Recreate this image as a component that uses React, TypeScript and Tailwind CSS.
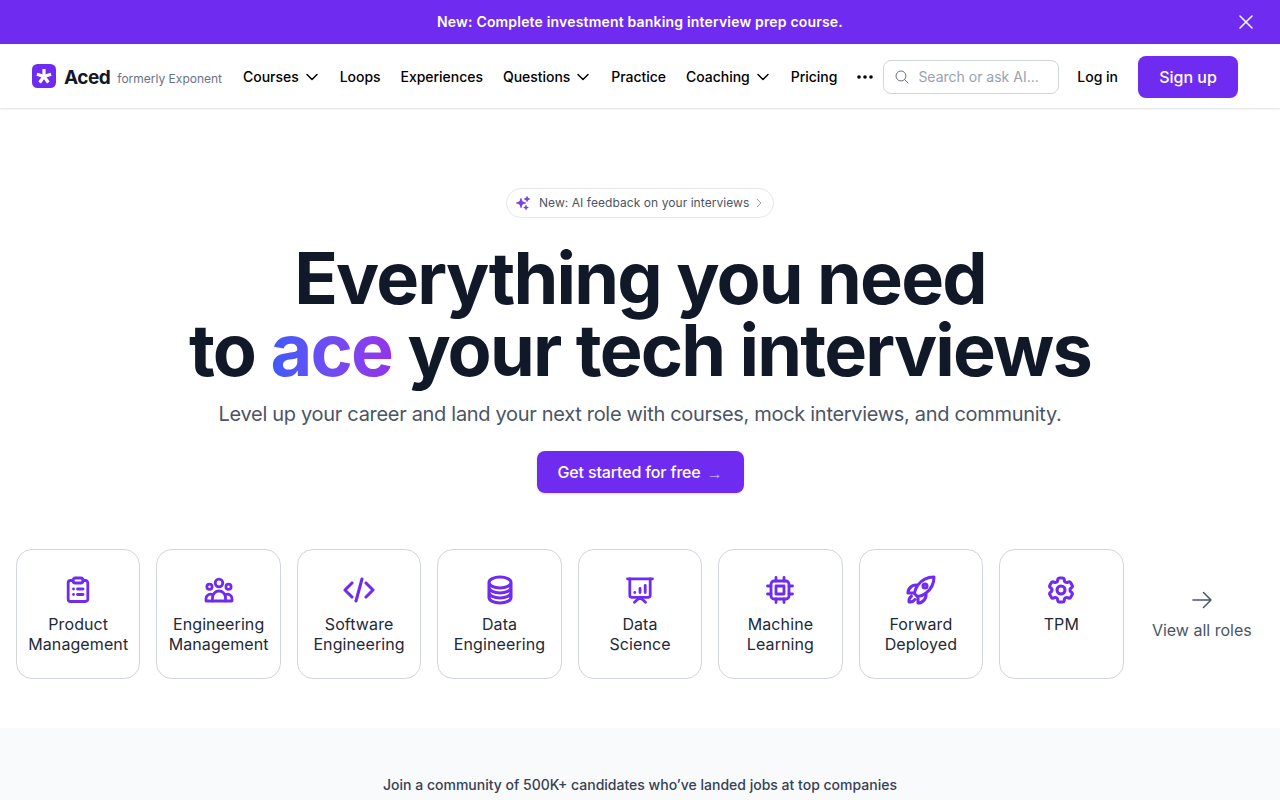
import {
  HiOutlineCodeBracket,
  HiOutlineCircleStack,
  HiOutlineRocketLaunch,
  HiOutlineCog6Tooth,
  HiOutlineChevronDown,
  HiOutlineChevronRight,
  HiOutlineMagnifyingGlass,
  HiOutlineXMark,
  HiOutlineArrowRight,
  HiSparkles,
} from 'react-icons/hi2'

type IconProps = { className?: string; strokeWidth?: number }

const navItems = [
  { label: 'Courses', menu: true },
  { label: 'Loops', menu: false },
  { label: 'Experiences', menu: false },
  { label: 'Questions', menu: true },
  { label: 'Practice', menu: false },
  { label: 'Coaching', menu: true },
  { label: 'Pricing', menu: false },
]

function ClipboardIcon({ className }: IconProps) {
  return (
    <svg viewBox="0 0 32 32" fill="none" stroke="currentColor" strokeWidth="2.8" strokeLinecap="round" strokeLinejoin="round" className={className}>
      <path d="M11 6.5H8.5a2.3 2.3 0 0 0-2.3 2.3v16.4a2.3 2.3 0 0 0 2.3 2.3h15a2.3 2.3 0 0 0 2.3-2.3V8.8a2.3 2.3 0 0 0-2.3-2.3H21" />
      <rect x="11" y="4" width="10" height="5" rx="2.2" />
      <path d="M11.5 15h.01M15.5 15h5.5M11.5 20.5h.01M15.5 20.5h5.5" />
    </svg>
  )
}

function GroupIcon({ className }: IconProps) {
  return (
    <svg viewBox="0 0 32 32" fill="none" stroke="currentColor" strokeWidth="2.8" strokeLinecap="round" strokeLinejoin="round" className={className}>
      <circle cx="16" cy="9" r="3.8" />
      <circle cx="6.5" cy="12.8" r="2.6" />
      <circle cx="25.5" cy="12.8" r="2.6" />
      <path d="M3 27h26v-2.2a4.6 4.6 0 0 0-6.5-4.2M3 27v-2.2a4.6 4.6 0 0 1 6.5-4.2" />
      <path d="M9.5 27v-3.5a6.5 6.5 0 0 1 13 0V27" />
    </svg>
  )
}

function PresentationIcon({ className }: IconProps) {
  return (
    <svg viewBox="0 0 32 32" fill="none" stroke="currentColor" strokeWidth="2.8" strokeLinecap="round" strokeLinejoin="round" className={className}>
      <path d="M3.5 4.8h25" />
      <path d="M5.8 4.8v16.5a2 2 0 0 0 2 2h16.4a2 2 0 0 0 2-2V4.8" />
      <path d="M16 23.3l-5.5 5M16 23.3l5.5 5" />
      <path d="M10.8 18.5v.01M16 18.5v-4M21.2 18.5v-7" />
    </svg>
  )
}

function ChipIcon({ className }: IconProps) {
  return (
    <svg viewBox="0 0 32 32" fill="none" stroke="currentColor" strokeWidth="2.8" strokeLinecap="round" strokeLinejoin="round" className={className}>
      <rect x="7" y="7" width="18" height="18" rx="3" />
      <rect x="12" y="12" width="8" height="8" />
      <path d="M12 3.5V7M20 3.5V7M12 25v3.5M20 25v3.5M3.5 12H7M3.5 20H7M25 12h3.5M25 20h3.5" />
    </svg>
  )
}

const roles = [
  { icon: ClipboardIcon, lines: ['Product', 'Management'] },
  { icon: GroupIcon, lines: ['Engineering', 'Management'] },
  { icon: HiOutlineCodeBracket, lines: ['Software', 'Engineering'] },
  { icon: HiOutlineCircleStack, lines: ['Data', 'Engineering'] },
  { icon: PresentationIcon, lines: ['Data', 'Science'] },
  { icon: ChipIcon, lines: ['Machine', 'Learning'] },
  { icon: HiOutlineRocketLaunch, lines: ['Forward', 'Deployed'] },
  { icon: HiOutlineCog6Tooth, lines: ['TPM'] },
]

function Logo() {
  return (
    <svg viewBox="0 0 24 24" className="-mt-0.5 h-6 w-6 shrink-0">
      <rect width="24" height="24" rx="5.5" fill="#6f2cf0" />
      <g stroke="#fff" strokeWidth="3.2">
        <path d="M12 12.5V5" />
        <path d="M12 12.5l7.1-2.3" />
        <path d="M12 12.5l4.4 6" />
        <path d="M12 12.5l-4.4 6" />
        <path d="M12 12.5l-7.1-2.3" />
      </g>
    </svg>
  )
}

export default function App() {
  return (
    <div className="flex h-screen flex-col overflow-hidden bg-white font-['Inter',sans-serif]">
      <div className="relative flex h-11 shrink-0 items-center justify-center bg-[#6f2cf0] text-sm font-semibold tracking-[0.18px] text-white">
        <span>New: Complete investment banking interview prep course.</span>
        <HiOutlineXMark className="absolute right-[22px] top-[10px] h-6 w-6" />
      </div>

      <header className="flex h-16 shrink-0 items-center whitespace-nowrap pl-8 pr-[42px] pt-[2px] shadow-[0_1px_2px_rgba(0,0,0,0.12)]">
        <div className="flex w-[191px] shrink-0 items-center">
          <Logo />
          <span className="ml-2 text-[19px] font-bold leading-none tracking-tight text-[#111827]">Aced</span>
          <span className="ml-[7px] mt-[3px] text-xs text-gray-500">formerly Exponent</span>
        </div>
        <nav className="ml-5 flex items-center gap-5 text-sm font-medium tracking-[-0.03px] text-black">
          {navItems.map((item) => (
            <div key={item.label} className="flex items-center gap-1">
              <span>{item.label}</span>
              {item.menu && <HiOutlineChevronDown className="ml-px h-4 w-4" strokeWidth={2.2} />}
            </div>
          ))}
          <svg viewBox="0 0 16 16" fill="currentColor" className="h-4 w-4">
            <circle cx="2" cy="8" r="1.8" />
            <circle cx="8" cy="8" r="1.8" />
            <circle cx="14" cy="8" r="1.8" />
          </svg>
        </nav>
        <div className="ml-[10px] flex h-[34px] w-[176px] items-center gap-2 rounded-lg border border-gray-300 pl-[10px] text-sm text-gray-400">
          <HiOutlineMagnifyingGlass className="h-4 w-4 text-gray-500" />
          <span>Search or ask AI...</span>
        </div>
        <span className="ml-[18px] text-sm font-medium text-black">Log in</span>
        <button className="ml-5 h-[42px] w-[100px] rounded-lg bg-[#6f2cf0] text-base font-medium text-white">Sign up</button>
      </header>

      <main className="flex flex-col items-center pt-20">
        <div className="flex h-[30px] w-[268px] items-center rounded-full border border-gray-200 pl-2 text-xs tracking-[0.06px] text-gray-600">
          <HiSparkles className="h-4 w-4 text-[#7c3fe0]" />
          <span className="ml-2">New: AI feedback on your interviews</span>
          <HiOutlineChevronRight className="ml-1 h-3 w-3 text-gray-500" />
        </div>

        <h1 className="mt-6 text-center text-[72px] font-bold leading-[72px] tracking-[-0.025em] text-[#111827]">
          Everything you need
          <br />
          to{' '}
          <span className="bg-gradient-to-r from-[#3b5bfb] to-[#9333ea] bg-clip-text text-transparent">ace</span>{' '}
          your tech interviews
        </h1>

        <p className="mt-[14px] text-xl leading-7 tracking-[-0.31px] text-gray-600">
          Level up your career and land your next role with courses, mock interviews, and community.
        </p>

        <button className="mt-[23px] flex h-[42px] w-[207px] items-center justify-center gap-[6px] rounded-lg bg-[#6f2cf0] text-base font-medium tracking-[-0.15px] text-white shadow-sm">
          <span>Get started for free</span>
          <span className="mt-1 font-['Liberation_Sans',sans-serif] text-base text-white/60">→</span>
        </button>

        <div className="mt-14 grid w-full grid-cols-9 gap-4 px-4">
          {roles.map((role) => (
            <div
              key={role.lines[0] + role.lines[role.lines.length - 1]}
              className="flex h-[130px] flex-col items-center rounded-2xl border border-gray-300 pt-6 text-center text-base leading-5 tracking-[0.1px] text-gray-800"
            >
              <role.icon className="mb-2 h-8 w-8 text-[#6f2cf0]" strokeWidth={2.3} />
              {role.lines.map((line) => (
                <span key={line}>{line}</span>
              ))}
            </div>
          ))}
          <div className="flex h-[130px] flex-col items-center justify-center gap-2 text-base leading-5 text-gray-600">
            <HiOutlineArrowRight className="h-6 w-6" />
            <span>View all roles</span>
          </div>
        </div>
      </main>

      <section className="mt-[49px] grow bg-gray-50 pt-[47px] text-center text-sm font-medium text-gray-700">
        Join a community of 500K+ candidates who’ve landed jobs at top companies
      </section>
    </div>
  )
}
